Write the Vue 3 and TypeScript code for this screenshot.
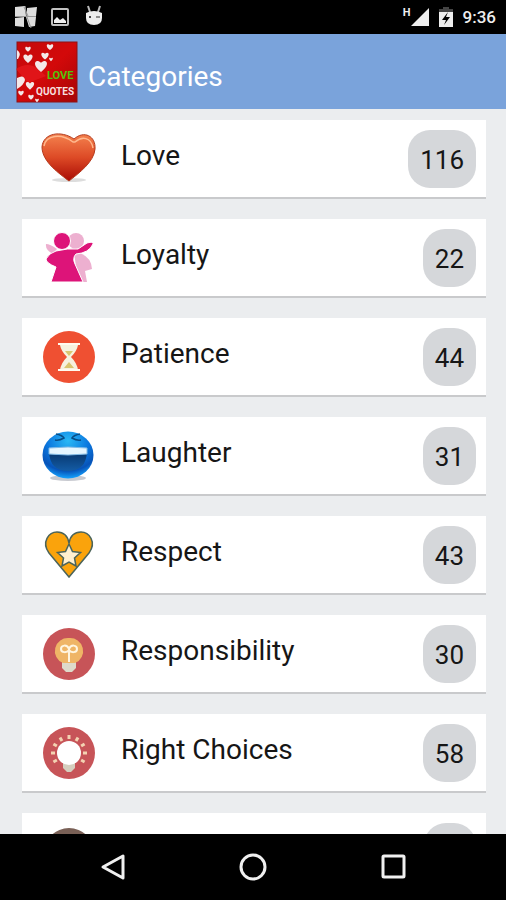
<script setup lang="ts">
interface Category {
  icon: string
  name?: string
  count?: number
}

const categories: Category[] = [
  { icon: 'love', name: 'Love', count: 116 },
  { icon: 'loyalty', name: 'Loyalty', count: 22 },
  { icon: 'patience', name: 'Patience', count: 44 },
  { icon: 'laughter', name: 'Laughter', count: 31 },
  { icon: 'respect', name: 'Respect', count: 43 },
  { icon: 'responsibility', name: 'Responsibility', count: 30 },
  { icon: 'choices', name: 'Right Choices', count: 58 },
  { icon: 'more' },
]

// Rays around the bulb, in degrees clockwise from the top
const rays: number[] = [-120, -90, -60, -30, 0, 30, 60, 90, 120]
</script>

<template>
  <div class="screen">
    <div class="status">
      <div class="status-group">
        <svg class="notice" viewBox="0 0 24 24">
          <path d="M1 2 11 1 12 11 1 11zM13 3 23 2 22 11 13 11zM1 13 10 12 10 22 1 21zM12 12 22 12 21 21 15 22z" fill="#dedede" />
          <path d="M11 1 13 12 17 23M1 11.500h21M10 2l4 9" stroke="#999" fill="none" />
        </svg>
        <svg class="notice" viewBox="0 0 24 24">
          <rect x="4" y="4" width="16" height="16" rx="1" fill="none" stroke="#c2c2c2" stroke-width="2" />
          <path d="M6 18v-3l3-3 3 3 3-2 3 3v2z" fill="#eee" />
        </svg>
        <svg class="notice" viewBox="0 0 24 24">
          <path d="M6 1l2 6M18 1l-2 6" stroke="#bbb" stroke-width="2" />
          <path d="M4 8q8-4 16 0v5q0 7-8 7t-8-7z" fill="#eee" />
          <circle cx="8" cy="12" r="1" fill="#111" />
          <path d="M14 12h4" stroke="#333" stroke-width="1" />
        </svg>
      </div>
      <div class="status-group">
        <div class="signal">
          <span>H</span>
          <svg viewBox="0 0 20 20"><path d="M20 0v20H0z" fill="#eee" /></svg>
        </div>
        <svg class="battery" viewBox="0 0 14 20">
          <path d="M4 0h6v2h4v3H0V2h4z" fill="#444" />
          <path d="M0 5h14v15H0z" fill="#eee" />
          <path d="M9 5 3 13h4l-2 5 6-8H7z" fill="#000" />
        </svg>
        <time>9:36</time>
      </div>
    </div>

    <header class="bar">
      <svg class="logo" viewBox="0 0 62 62" role="img" aria-label="Love Quotes">
        <defs>
          <linearGradient id="logo-red" x1="0" y1="0" x2="1" y2="1">
            <stop offset="0" stop-color="#c4090b" />
            <stop offset=".5" stop-color="#d3090a" />
            <stop offset="1" stop-color="#a50506" />
          </linearGradient>
          <path id="mini" d="M0 3C-8-3-4-8 0-4 4-8 8-3 0 3z" />
        </defs>
        <rect x="1" y="1" width="60" height="60" fill="url(#logo-red)" stroke="#8e1214" />
        <path d="M0 28q12-8 22 0l8 7-18 7z" fill="#e3191b" opacity=".8" />
        <g fill="#f4e8e8">
          <use href="#mini" transform="translate(34 7) scale(.7)" />
          <use href="#mini" transform="translate(12 9) scale(.6)" />
          <use href="#mini" transform="translate(12 19) scale(1)" />
          <use href="#mini" transform="translate(29 16) scale(.8)" />
          <use href="#mini" transform="translate(25 27) scale(1.300)" />
          <use href="#mini" transform="translate(14 46) scale(.9)" />
          <use href="#mini" transform="translate(5 53) scale(.6)" />
          <use href="#mini" transform="translate(15 57) scale(.6)" />
          <use href="#mini" transform="translate(21 60) scale(.4)" />
          <use href="#mini" transform="translate(35 19) scale(.4)" />
          <path d="M1 9q5 3 1 9H1zM1 37q7-4 8 2-1 5-8 9z" />
        </g>
        <text x="31" y="38" class="logo-love">LOVE</text>
        <text x="20" y="54" class="logo-quotes">QUOTES</text>
      </svg>
      <h1>Categories</h1>
    </header>

    <main class="content">
      <ul class="list">
        <li v-for="c in categories" :key="c.icon">
          <a class="card" href="#">
            <svg v-if="c.icon === 'love'" class="icon" viewBox="0 0 56 56">
              <defs>
                <linearGradient id="heart" x1="0" y1="0" x2="0" y2="1">
                  <stop offset="0" stop-color="#f4824e" />
                  <stop offset=".5" stop-color="#dd4a26" />
                  <stop offset="1" stop-color="#a90b04" />
                </linearGradient>
              </defs>
              <ellipse cx="28" cy="49" rx="17" ry="2" fill="#ddd" />
              <path d="M28 50C19 43 1 31 1 16 2 2 20-1 33 8 43-1 55 5 54 18 53 31 38 42 28 50z" fill="url(#heart)" stroke="#b53a1c" />
              <path d="M3 15C5 4 20 2 32 11h2C41 5 50 6 52 17" fill="none" stroke="#ffb98f" stroke-width="1.500" />
            </svg>

            <svg v-else-if="c.icon === 'loyalty'" class="icon" viewBox="0 0 56 56">
              <g fill="#edb0d0">
                <circle cx="35" cy="11" r="8" />
                <path d="M5 14q4 0 11 5l-4 5Q4 20 5 14zM33 22q17 2 18 17l-7 2 2 11h-9z" />
              </g>
              <path d="M15 21q12-3 22-2l9-6q7-2 6 1-4 9-17 10-4 4-1 10l8 18H10l5-15q-10-4-10-8 3-6 10-8z" fill="#dd1479" stroke="#fff" />
              <circle cx="21" cy="11" r="8.500" fill="#dd1479" stroke="#fff" />
            </svg>

            <svg v-else-if="c.icon === 'patience'" class="icon" viewBox="0 0 56 56">
              <circle cx="28" cy="28" r="26" fill="#ef5032" />
              <path d="M19 16h18q-1 6-7 12 6 6 7 13H19q1-7 7-13-6-6-7-12z" fill="#f6f1df" />
              <path d="M24 22h8l-4 5zM28 33l5 6H23z" fill="#d9c56f" />
              <path d="M17 15h22M17 41h22" stroke="#fff9ee" stroke-width="2" />
            </svg>

            <svg v-else-if="c.icon === 'laughter'" class="icon" viewBox="0 0 56 56">
              <defs>
                <radialGradient id="face" cx=".5" cy=".2" r=".8">
                  <stop offset="0" stop-color="#29b8f5" />
                  <stop offset=".5" stop-color="#0b78df" />
                  <stop offset=".8" stop-color="#0753b8" />
                  <stop offset="1" stop-color="#15a3ff" />
                </radialGradient>
                <linearGradient id="mouth" x1="0" y1="0" x2="0" y2="1">
                  <stop offset="0" stop-color="#07366d" />
                  <stop offset="1" stop-color="#145ca5" />
                </linearGradient>
              </defs>
              <ellipse cx="27" cy="50" rx="18" ry="3" fill="#c8cad0" />
              <ellipse cx="27" cy="27" rx="25.500" ry="23.500" fill="url(#face)" />
              <path d="M8 24q19 2 38 0-1 19-19 19T8 24z" fill="url(#mouth)" />
              <path d="M8 20q19-2 38 0v6q-19 2-38 0z" fill="#e6f6ff" stroke="#7fb9e5" />
              <path d="M15 6q6 1 8 4-5 3-9 2M39 6q-6 1-8 4 5 3 9 2" fill="none" stroke="#084d86" stroke-width="1.500" />
            </svg>

            <svg v-else-if="c.icon === 'respect'" class="icon" viewBox="0 0 56 56">
              <path d="M28 50 8 26C0 15 8 5 16 5q10 0 12 11Q30 5 40 5c8 0 16 10 8 21z" fill="#faa30c" stroke="#4b645a" stroke-width="1.500" />
              <path d="m28 17 3.500 7.500 8 1-6 5.500 1.500 8-7-4-7 4 1.500-8-6-5.500 8-1z" fill="#fff0d0" stroke="#4b645a" stroke-width="1.500" />
            </svg>

            <svg v-else-if="c.icon === 'responsibility'" class="icon" viewBox="0 0 56 56">
              <circle cx="28" cy="28" r="26" fill="#c75458" />
              <path d="M21 36h14v6l-4 4h-6l-4-4z" fill="#dedaca" />
              <path d="M28 12a13 13 0 0 1 6 25H22a13 13 0 0 1 6-25z" fill="#efb566" />
              <path d="M28 36V23c-2-5-8-4-8 0s6 4 8 1c2 3 8 3 8-1s-6-5-8 0" fill="none" stroke="#fff5df" stroke-width="2" />
            </svg>

            <svg v-else-if="c.icon === 'choices'" class="icon" viewBox="0 0 56 56">
              <circle cx="28" cy="28" r="26" fill="#c75458" />
              <path d="M22 38h12v5l-4 4h-4l-4-4z" fill="#d5cfbf" />
              <circle cx="28" cy="28" r="12" fill="#fff" />
              <path v-for="r in rays" :key="r" d="M28 10v4" :transform="`rotate(${r} 28 28)`" stroke="#f3d3b2" stroke-width="3" />
            </svg>

            <svg v-else class="icon" viewBox="0 0 56 56">
              <circle cx="28" cy="29" r="25" fill="#796056" />
            </svg>

            <span class="name">{{ c.name }}</span>
            <span class="count">{{ c.count }}</span>
          </a>
        </li>
      </ul>
    </main>

    <nav class="keys">
      <button type="button" aria-label="Back">
        <svg viewBox="0 0 28 28"><path d="M24 3v22L4 14z" /></svg>
      </button>
      <button type="button" aria-label="Home">
        <svg viewBox="0 0 28 28"><circle cx="14" cy="14" r="12" /></svg>
      </button>
      <button type="button" aria-label="Recents">
        <svg viewBox="0 0 28 28"><rect x="4" y="3" width="21" height="21" rx="1" /></svg>
      </button>
    </nav>
  </div>
</template>

<style>
body {
  margin: 0;
  background: #ebedef;
}
</style>

<style scoped>
.screen {
  display: flex;
  flex-direction: column;
  height: 100vh;
  font-family: Roboto, "Liberation Sans", sans-serif;
  color: #161616;
}

.status {
  display: flex;
  flex: none;
  align-items: center;
  justify-content: space-between;
  height: 34px;
  padding: 0 10px 0 14px;
  background: #000;
  color: #eee;
}

.status-group {
  display: flex;
  align-items: center;
  gap: 10px;
}

.notice {
  width: 24px;
  height: 24px;
}

.signal {
  display: flex;
  align-items: flex-start;
}

.signal span {
  font-size: 11px;
  line-height: 11px;
  font-weight: 700;
}

.signal svg {
  width: 18px;
  height: 20px;
}

.battery {
  width: 14px;
  height: 20px;
}

time {
  font-size: 17px;
  font-weight: 500;
}

.bar {
  display: flex;
  flex: none;
  align-items: center;
  gap: 10px;
  height: 75px;
  padding: 0 16px;
  background: #7aa3db;
}

.logo {
  width: 62px;
  height: 62px;
}

.logo-love,
.logo-quotes {
  font-family: "Liberation Sans Narrow", Roboto, sans-serif;
  font-weight: 700;
}

.logo-love {
  font-size: 11px;
  fill: #51c40b;
}

.logo-quotes {
  font-size: 10px;
  fill: #f7dfdf;
}

h1 {
  margin: 0;
  padding-top: 10px;
  font-size: 28px;
  line-height: 32px;
  font-weight: 400;
  color: #fff;
}

.content {
  flex: 1;
  min-height: 0;
  overflow: hidden;
  background: #ebedef;
}

.list {
  display: flex;
  flex-direction: column;
  gap: 20px;
  margin: 0;
  padding: 11px 20px 20px 22px;
  list-style: none;
}

.card {
  display: flex;
  align-items: center;
  box-sizing: border-box;
  height: 79px;
  padding: 0 10px 0 19px;
  border-bottom: 2px solid #c9cacc;
  background: #fff;
  color: inherit;
  text-decoration: none;
}

.icon {
  flex: none;
  width: 56px;
  height: 56px;
}

.name {
  flex: 1;
  padding: 0 0 6px 24px;
  font-size: 28px;
  line-height: 32px;
}

.count {
  box-sizing: border-box;
  min-width: 52px;
  height: 58px;
  padding: 1px 12px 0;
  border-radius: 22px;
  background: #d5d7da;
  font-size: 26px;
  line-height: 58px;
  text-align: center;
}

.keys {
  display: flex;
  flex: none;
  align-items: center;
  justify-content: center;
  gap: 112px;
  height: 66px;
  background: #000;
}

.keys button {
  display: flex;
  padding: 0;
  border: 0;
  background: none;
}

.keys svg {
  width: 28px;
  height: 28px;
  fill: none;
  stroke: #f0f0f0;
  stroke-width: 3;
  stroke-linejoin: round;
}
</style>
